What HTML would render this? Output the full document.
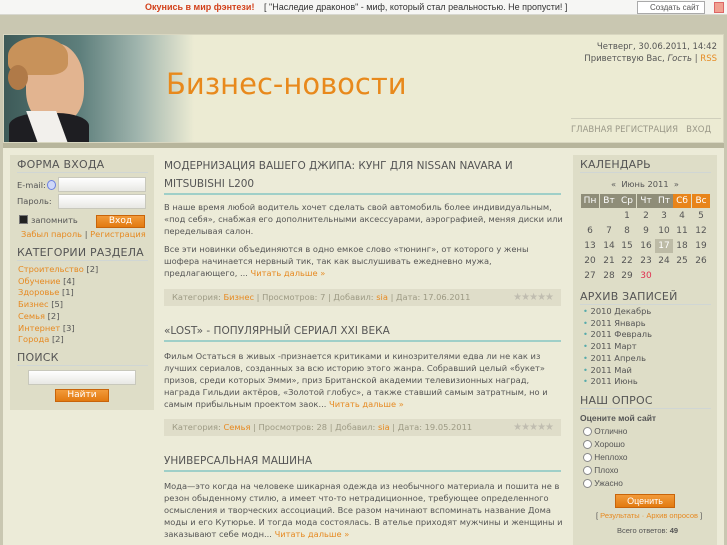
<!DOCTYPE html>
<html><head><meta charset="utf-8"><style>
*{margin:0;padding:0;box-sizing:border-box}
body{width:727px;height:545px;overflow:hidden;background:#c9c7b1;font-family:"DejaVu Sans","Liberation Sans",sans-serif;font-size:8.5px;color:#555;position:relative}
.a{position:absolute}
.top{left:0;top:0;width:727px;height:15px;background:#f6f6f4;border-bottom:1px solid #d8d8d0;font-size:8.3px;line-height:14px;white-space:nowrap}
.hdr{left:3px;top:34px;width:721px;height:109px;background:#ecebd3;border:1px solid #d8d6c0;overflow:hidden}
.band{left:3px;top:143px;width:721px;height:5px;background:#b7b59c}
.main{left:3px;top:148px;width:721px;height:397px;background:#ecebd8}
.side{background:#deddc7}
h3{position:absolute;font-weight:normal;font-size:11px;color:#555;letter-spacing:0.2px;border-bottom:1px solid #d0d6d4;padding-bottom:1px}
.o{color:#e68a22}
.t{position:absolute;font-size:8.3px;line-height:12px;color:#555}
.meta{position:absolute;left:164px;width:397px;height:17px;background:#dfddc9;color:#9d9a84;font-size:8.3px;line-height:17px;padding-left:8px}
.h2{position:absolute;left:164px;width:397px;font-size:10.5px;color:#555;border-bottom:2px solid #9fcfc8;line-height:18px}
.btn{position:absolute;background:linear-gradient(#f29a3a,#e27a10);color:#fff;text-align:center;border:1px solid #c8640a;font-size:9px}
.inp{position:absolute;background:linear-gradient(#fff,#e8e8e4);border:1px solid #c8c8bc}
.cal div{position:absolute;width:18px;text-align:center;font-size:9px;line-height:14px;color:#555}
.stars{position:absolute;right:8px;top:0;color:#c0bdb0;font-size:10px;letter-spacing:-1px}
</style></head><body>
<div class="a top"><span class="a" style="left:145px;color:#d2401a;font-weight:bold;font-family:'Liberation Sans',sans-serif;font-size:9px">Окунись в мир фэнтези!</span><span class="a" style="left:264px;color:#333;font-family:'Liberation Sans',sans-serif;font-size:9px">[ "Наследие драконов" - миф, который стал реальностью. Не пропусти! ]</span>
<span class="a" style="left:637px;top:1px;width:68px;height:13px;border:1px solid #aaa;background:#fff;line-height:11px;font-size:8px;padding-left:12px;font-family:'Liberation Sans',sans-serif">Создать сайт</span><span class="a" style="left:714px;top:2px;width:10px;height:11px;background:#f0a090;border:1px solid #d66"></span></div>
<div class="a hdr">
<div class="a" style="left:0;top:0;width:190px;height:108px;background:linear-gradient(90deg,#3d5a58 0%,#5e7f7c 40%,#9fb4ad 70%,#ecebd3 100%)"></div>
<div class="a" style="left:22px;top:8px;width:58px;height:80px;border-radius:45% 50% 40% 40%;background:#e2b490"></div>
<div class="a" style="left:4px;top:2px;width:60px;height:38px;border-radius:50% 50% 30% 30%;background:#c8925a"></div>
<div class="a" style="left:4px;top:30px;width:20px;height:25px;border-radius:50%;background:#b07a48"></div>
<div class="a" style="left:5px;top:78px;width:80px;height:32px;border-radius:40% 40% 0 0;background:#1e1e22"></div>
<div class="a" style="left:28px;top:76px;width:30px;height:32px;background:#f2f0ec;transform:skewX(20deg)"></div>
<div class="a" style="left:162px;top:32px;font-size:29px;color:#e8891c;font-family:'DejaVu Sans',sans-serif">Бизнес-новости</div>
<div class="a" style="right:6px;top:6px;font-size:8.5px;text-align:right;line-height:12px;color:#555">Четверг, 30.06.2011, 14:42<br>Приветствую Вас, <i>Гость</i> | <span class="o">RSS</span></div>
<div class="a" style="left:567px;top:83px;width:150px;border-top:1px solid #d0cfbc"></div>
<div class="a" style="left:567px;top:90px;font-size:8.5px;color:#9a9888">ГЛАВНАЯ РЕГИСТРАЦИЯ &nbsp;&nbsp;ВХОД</div>
</div>
<div class="a band"></div>
<div class="a main"></div>
<div class="a side" style="left:10px;top:155px;width:144px;height:255px"></div>
<div class="a side" style="left:573px;top:155px;width:144px;height:390px"></div>
<h3 style="left:17px;top:158px;width:131px">ФОРМА ВХОДА</h3>
<div class="t" style="left:17px;top:179px">E-mail:</div><div class="a" style="left:47px;top:180px;width:9px;height:10px;border-radius:50%;background:#cfd8f8;border:1px solid #6a7fe0"></div>
<div class="inp" style="left:58px;top:177px;width:88px;height:15px"></div>
<div class="t" style="left:17px;top:195px">Пароль:</div>
<div class="inp" style="left:58px;top:194px;width:88px;height:15px"></div>
<div class="a" style="left:19px;top:215px;width:9px;height:9px;background:#222;border:1px solid #777"></div>
<div class="t" style="left:31px;top:214px">запомнить</div>
<div class="btn" style="left:96px;top:215px;width:49px;height:13px;line-height:11px">Вход</div>
<div class="t" style="left:21px;top:228px"><span class="o">Забыл пароль</span> | <span class="o">Регистрация</span></div>
<h3 style="left:17px;top:246px;width:131px">КАТЕГОРИИ РАЗДЕЛА</h3>
<div class="t" style="left:18px;top:264px;line-height:11.7px"><span class="o">Строительство</span> [2]<br><span class="o">Обучение</span> [4]<br><span class="o">Здоровье</span> [1]<br><span class="o">Бизнес</span> [5]<br><span class="o">Семья</span> [2]<br><span class="o">Интернет</span> [3]<br><span class="o">Города</span> [2]</div>
<h3 style="left:17px;top:351px;width:131px">ПОИСК</h3>
<div class="inp" style="left:28px;top:370px;width:108px;height:15px"></div>
<div class="btn" style="left:55px;top:389px;width:54px;height:13px;line-height:11px">Найти</div>
<div class="h2" style="top:157px;line-height:18px">МОДЕРНИЗАЦИЯ ВАШЕГО ДЖИПА: КУНГ ДЛЯ NISSAN NAVARA И MITSUBISHI L200</div>
<div class="t" style="left:164px;top:201px;width:400px">В наше время любой водитель хочет сделать свой автомобиль более индивидуальным, «под себя», снабжая его дополнительными аксессуарами, аэрографией, меняя диски или переделывая салон.</div>
<div class="t" style="left:164px;top:243px;width:400px">Все эти новинки объединяются в одно емкое слово «тюнинг», от которого у жены шофера начинается нервный тик, так как выслушивать ежедневно мужа, предлагающего, ... <span class="o">Читать дальше »</span></div>
<div class="meta" style="top:289px">Категория: <span class="o">Бизнес</span> | Просмотров: 7 | Добавил: <span class="o">sia</span> | Дата: 17.06.2011<span class="stars">★★★★★</span></div>
<div class="h2" style="top:322px">«LOST» - ПОПУЛЯРНЫЙ СЕРИАЛ XXI ВЕКА</div>
<div class="t" style="left:164px;top:350px;width:400px">Фильм Остаться в живых -признается критиками и кинозрителями едва ли не как из лучших сериалов, созданных за всю историю этого жанра. Собравший целый «букет» призов, среди которых Эмми», приз Британской академии телевизионных наград, награда Гильдии актёров, «Золотой глобус», а также ставший самым затратным, но и самым прибыльным проектом заок... <span class="o">Читать дальше »</span></div>
<div class="meta" style="top:419px">Категория: <span class="o">Семья</span> | Просмотров: 28 | Добавил: <span class="o">sia</span> | Дата: 19.05.2011<span class="stars">★★★★★</span></div>
<div class="h2" style="top:452px">УНИВЕРСАЛЬНАЯ МАШИНА</div>
<div class="t" style="left:164px;top:480px;width:400px">Мода—это когда на человеке шикарная одежда из необычного материала и пошита не в резон обыденному стилю, а имеет что-то нетрадиционное, требующее определенного осмысления и творческих ассоциаций. Все разом начинают вспоминать название Дома моды и его Кутюрье. И тогда мода состоялась. В ателье приходят мужчины и женщины и заказывают себе модн... <span class="o">Читать дальше »</span></div>
<h3 style="left:580px;top:158px;width:131px">КАЛЕНДАРЬ</h3>
<div class="t" style="left:611px;top:178px">«&nbsp; Июнь 2011 &nbsp;»</div>
<div class="cal">
<div style="left:581px;top:194px;background:#8f8d78;color:#fff">Пн</div><div style="left:600px;top:194px;background:#8f8d78;color:#fff">Вт</div><div style="left:618px;top:194px;background:#8f8d78;color:#fff">Ср</div><div style="left:637px;top:194px;background:#8f8d78;color:#fff">Чт</div><div style="left:655px;top:194px;background:#8f8d78;color:#fff">Пт</div><div style="left:673px;top:194px;background:#e8841a;color:#fff">Сб</div><div style="left:692px;top:194px;background:#e8841a;color:#fff">Вс</div>
<div style="left:618px;top:209px">1</div><div style="left:637px;top:209px">2</div><div style="left:655px;top:209px">3</div><div style="left:673px;top:209px">4</div><div style="left:692px;top:209px">5</div>
<div style="left:581px;top:224px">6</div><div style="left:600px;top:224px">7</div><div style="left:618px;top:224px">8</div><div style="left:637px;top:224px">9</div><div style="left:655px;top:224px">10</div><div style="left:673px;top:224px">11</div><div style="left:692px;top:224px">12</div>
<div style="left:581px;top:239px">13</div><div style="left:600px;top:239px">14</div><div style="left:618px;top:239px">15</div><div style="left:637px;top:239px">16</div><div style="left:655px;top:239px;background:#bdbba6;color:#fff">17</div><div style="left:673px;top:239px">18</div><div style="left:692px;top:239px">19</div>
<div style="left:581px;top:254px">20</div><div style="left:600px;top:254px">21</div><div style="left:618px;top:254px">22</div><div style="left:637px;top:254px">23</div><div style="left:655px;top:254px">24</div><div style="left:673px;top:254px">25</div><div style="left:692px;top:254px">26</div>
<div style="left:581px;top:269px">27</div><div style="left:600px;top:269px">28</div><div style="left:618px;top:269px">29</div><div style="left:637px;top:269px;color:#e03050">30</div>
</div>
<h3 style="left:580px;top:290px;width:131px">АРХИВ ЗАПИСЕЙ</h3>
<div class="t" style="left:583px;top:306px;line-height:11.7px"><span style="color:#5aa">•</span> 2010 Декабрь<br><span style="color:#5aa">•</span> 2011 Январь<br><span style="color:#5aa">•</span> 2011 Февраль<br><span style="color:#5aa">•</span> 2011 Март<br><span style="color:#5aa">•</span> 2011 Апрель<br><span style="color:#5aa">•</span> 2011 Май<br><span style="color:#5aa">•</span> 2011 Июнь</div>
<h3 style="left:580px;top:394px;width:131px">НАШ ОПРОС</h3>
<div class="t" style="left:580px;top:412px;font-weight:bold;font-family:'Liberation Sans',sans-serif;font-size:8.5px">Оцените мой сайт</div>
<div class="t" style="left:583px;top:425px;line-height:13px;font-family:'Liberation Sans',sans-serif">
<span style="display:inline-block;width:9px;height:9px;border:1px solid #888;border-radius:50%;background:#fff;vertical-align:middle"></span> Отлично<br>
<span style="display:inline-block;width:9px;height:9px;border:1px solid #888;border-radius:50%;background:#fff;vertical-align:middle"></span> Хорошо<br>
<span style="display:inline-block;width:9px;height:9px;border:1px solid #888;border-radius:50%;background:#fff;vertical-align:middle"></span> Неплохо<br>
<span style="display:inline-block;width:9px;height:9px;border:1px solid #888;border-radius:50%;background:#fff;vertical-align:middle"></span> Плохо<br>
<span style="display:inline-block;width:9px;height:9px;border:1px solid #888;border-radius:50%;background:#fff;vertical-align:middle"></span> Ужасно</div>
<div class="btn" style="left:615px;top:494px;width:60px;height:14px;line-height:12px;font-family:'Liberation Sans',sans-serif">Оценить</div>
<div class="t" style="left:596px;top:510px;font-size:7.5px;font-family:'Liberation Sans',sans-serif">[ <span class="o">Результаты · Архив опросов</span> ]</div>
<div class="t" style="left:617px;top:525px;font-size:7.5px;font-family:'Liberation Sans',sans-serif">Всего ответов: <b>49</b></div>
</body></html>
